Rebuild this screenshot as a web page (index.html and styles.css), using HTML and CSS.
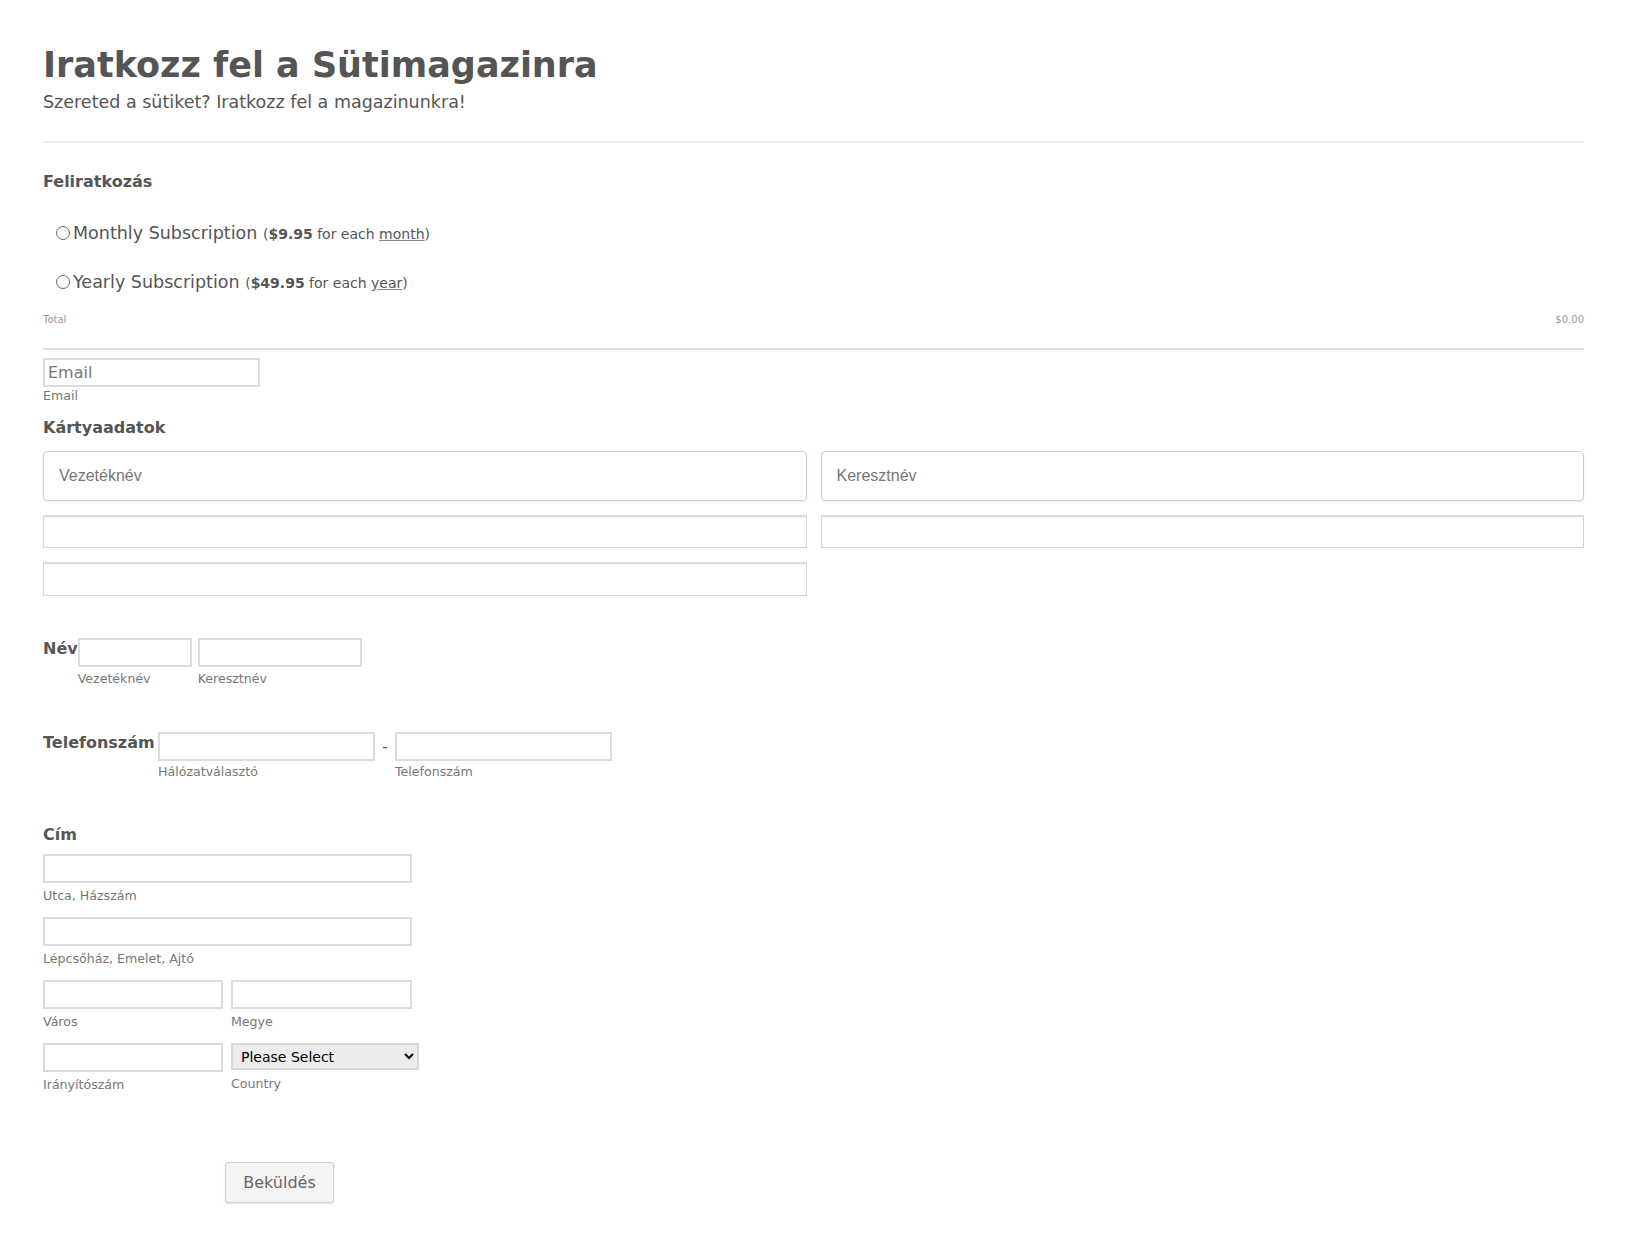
FILE: index.html
```html
<!DOCTYPE html>
<html lang="hu">
<head>
<meta charset="utf-8">
<title>Iratkozz fel a Sütimagazinra</title>
<link rel="stylesheet" href="styles.css">
</head>
<body>
<div class="page">
  <header class="head">
    <h1 class="title">Iratkozz fel a Sütimagazinra</h1>
    <p class="subtitle">Szereted a sütiket? Iratkozz fel a magazinunkra!</p>
  </header>
  <hr class="divider">

  <section class="products">
    <h2 class="label">Feliratkozás</h2>
    <div class="options">
      <label class="option"><span class="radio"></span><span class="opt-name">Monthly Subscription</span>&nbsp;<span class="price">(<b>$9.95</b> for each <u>month</u>)</span></label>
      <label class="option"><span class="radio"></span><span class="opt-name">Yearly Subscription</span>&nbsp;<span class="price">(<b>$49.95</b> for each <u>year</u>)</span></label>
    </div>
    <div class="total"><span>Total</span><span>$0.00</span></div>
    <div class="rule"></div>
  </section>

  <div class="email-field">
    <input class="box email-input" type="text" placeholder="Email">
    <div class="sublabel tight">Email</div>
  </div>

  <h2 class="label card-label">Kártyaadatok</h2>
  <div class="card-grid">
    <input class="card-input rounded" type="text" placeholder="Vezetéknév">
    <input class="card-input rounded" type="text" placeholder="Keresztnév">
    <div class="card-frame mid"></div>
    <div class="card-frame mid"></div>
    <div class="card-frame tall"></div>
  </div>

  <div class="inline-row name-row">
    <div class="label inline-label">Név</div>
    <div class="cell"><input class="box w114" type="text"><div class="sublabel">Vezetéknév</div></div>
    <div class="cell"><input class="box w164" type="text"><div class="sublabel">Keresztnév</div></div>
  </div>

  <div class="inline-row phone-row">
    <div class="label inline-label phone-label">Telefonszám</div>
    <div class="cell"><input class="box w217" type="text"><div class="sublabel sp3">Hálózatválasztó</div></div>
    <div class="dash">-</div>
    <div class="cell"><input class="box w217" type="text"><div class="sublabel sp3">Telefonszám</div></div>
  </div>

  <section class="address">
    <h2 class="label">Cím</h2>
    <div class="addr-grid">
      <div class="addr-cell full"><input class="box" type="text"><div class="sublabel sp5">Utca, Házszám</div></div>
      <div class="addr-cell full"><input class="box" type="text"><div class="sublabel sp5">Lépcsőház, Emelet, Ajtó</div></div>
      <div class="addr-cell"><input class="box" type="text"><div class="sublabel sp5">Város</div></div>
      <div class="addr-cell"><input class="box" type="text"><div class="sublabel sp5">Megye</div></div>
      <div class="addr-cell"><input class="box" type="text"><div class="sublabel sp5">Irányítószám</div></div>
      <div class="addr-cell"><select class="country"><option>Please Select</option></select><div class="sublabel sp6">Country</div></div>
    </div>
  </section>

  <div class="actions">
    <button class="submit" type="button">Beküldés</button>
  </div>
</div>
</body>
</html>
```

FILE: styles.css
```css
* { box-sizing: border-box; }

html, body {
  margin: 0;
  background: #fff;
}

body {
  font-family: "DejaVu Sans", Verdana, sans-serif;
  color: #555;
}

.page {
  padding: 45px 44px 40px 43px;
}

.title {
  margin: 0;
  font-size: 35px;
  line-height: 41px;
  font-weight: 700;
  color: #555;
}

.subtitle {
  margin: 6px 0 0;
  font-size: 17.5px;
  line-height: 20px;
  color: #555;
}

.divider {
  margin: 29px 0 0;
  border: 0;
  height: 2px;
  background: #ececec;
}

.label {
  margin: 0;
  font-size: 16px;
  line-height: 19px;
  font-weight: 700;
  color: #555;
}

.products > .label {
  margin-top: 29px;
}

.options {
  margin-top: 32px;
  display: flex;
  flex-direction: column;
  gap: 28px;
  padding-left: 13px;
}

.option {
  display: flex;
  align-items: baseline;
  font-size: 17.5px;
  line-height: 20px;
  color: #555;
}

.radio {
  flex: none;
  width: 14px;
  height: 14px;
  border: 1px solid #6a6a6a;
  border-radius: 50%;
  margin-right: 3px;
  position: relative;
  top: 1px;
}

.price {
  font-size: 14px;
  color: #555;
}

.price u {
  text-decoration: underline;
  text-decoration-color: #888;
}

.total {
  margin-top: 21px;
  display: flex;
  justify-content: space-between;
  font-size: 10px;
  line-height: 12px;
  color: #999;
}

.rule {
  margin-top: 22px;
  height: 2px;
  background: #dedede;
}

.email-field {
  margin-top: 8px;
}

.box {
  display: block;
  height: 29px;
  border: 2px solid #dcdcdc;
  background: #fff;
  padding: 0 3px;
  font-family: "DejaVu Sans", Verdana, sans-serif;
  font-size: 16px;
  color: #555;
  outline: none;
}

.box::placeholder {
  color: #777;
}

.email-input {
  width: 217px;
}

.sublabel {
  margin-top: 4px;
  font-size: 12.6px;
  line-height: 15px;
  color: #777;
  white-space: nowrap;
}

.sublabel.tight { margin-top: 1px; }
.sublabel.sp3 { margin-top: 3px; }
.sublabel.sp5 { margin-top: 5px; }
.sublabel.sp6 { margin-top: 6px; }

.card-label {
  margin-top: 15px;
}

.card-grid {
  margin-top: 14px;
  display: grid;
  grid-template-columns: 1fr 1fr;
  column-gap: 14px;
  row-gap: 14px;
}

.card-input {
  display: block;
  width: 100%;
  height: 50px;
  border: 1px solid #cfcfcf;
  border-radius: 4px;
  box-shadow: 0 1px 2px rgba(0, 0, 0, 0.08);
  padding: 0 15px;
  font-family: "Liberation Sans", Arial, sans-serif;
  font-size: 16px;
  color: #555;
  background: #fff;
  outline: none;
}

.card-input::placeholder {
  color: #777;
}

.card-frame {
  border: 1px solid #d4d4d4;
  border-top: 2px solid #dcdcdc;
  box-shadow: inset 0 1px 1px rgba(0, 0, 0, 0.04);
  background: #fff;
}

.card-frame.mid { height: 33px; }
.card-frame.tall { height: 34px; }

.inline-row {
  display: flex;
  align-items: flex-start;
}

.name-row { margin-top: 42px; }
.phone-row { margin-top: 46px; }

.inline-label {
  padding-top: 1px;
}

.phone-label {
  min-width: 115px;
}

.name-row .cell + .cell {
  margin-left: 6px;
}

.w114 { width: 114px; }
.w164 { width: 164px; }
.w217 { width: 217px; }

.dash {
  width: 20px;
  height: 29px;
  line-height: 29px;
  text-align: center;
  font-size: 16px;
  color: #555;
}

.address {
  margin-top: 46px;
}

.addr-grid {
  margin-top: 10px;
  width: 369px;
  display: grid;
  grid-template-columns: 180px 181px;
  column-gap: 8px;
  row-gap: 14px;
}

.addr-cell.full {
  grid-column: 1 / -1;
}

.addr-cell .box {
  width: 100%;
}

.country {
  display: block;
  width: 188px;
  height: 27px;
  border: 2px solid #d8d8d8;
  background-color: #ececec;
  font-family: "DejaVu Sans", Verdana, sans-serif;
  font-size: 14px;
  color: #000;
  padding: 0 4px;
}

.actions {
  margin-top: 70px;
  padding-left: 182px;
}

.submit {
  width: 109px;
  height: 41px;
  border: 1px solid #cfcfcf;
  border-radius: 3px;
  background: #f4f4f4;
  box-shadow: 0 1px 2px rgba(0, 0, 0, 0.1);
  font-family: "DejaVu Sans", Verdana, sans-serif;
  font-size: 16px;
  color: #666;
  padding: 0;
}
```
